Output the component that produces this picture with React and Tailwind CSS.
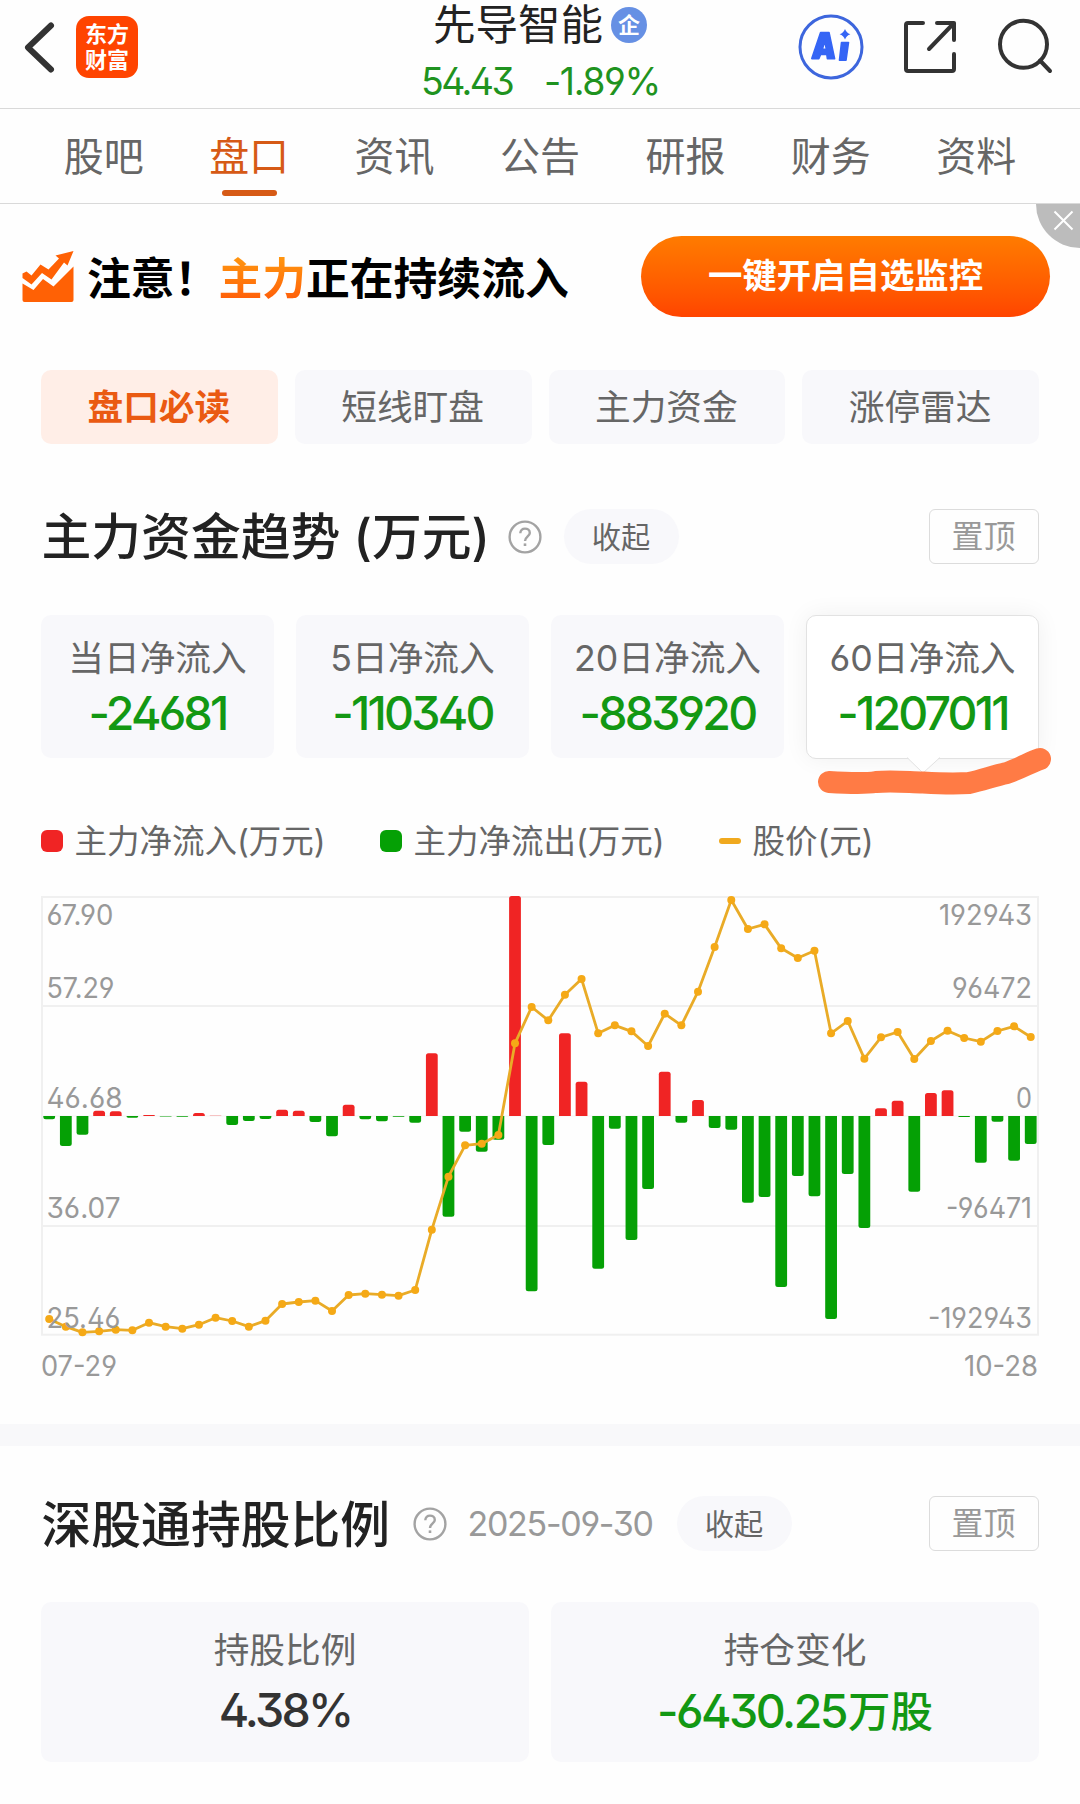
import React from "react";

const TABS = ["股吧", "盘口", "资讯", "公告", "研报", "财务", "资料"];
const FILTERS = ["盘口必读", "短线盯盘", "主力资金", "涨停雷达"];
const FLOWS = [
  { label: "当日净流入", value: "-24681" },
  { label: "5日净流入", value: "-110340" },
  { label: "20日净流入", value: "-883920" },
  { label: "60日净流入", value: "-1207011", active: true },
];

/* Bar ends in chart units; the zero line sits at 708. */
const BARS = [
  718, 798, 764, 692, 694, 713, 705, 709.5, 710.5, 699, 707, 735, 723, 717, 689, 692, 726, 769, 674, 718,
  724, 710, 728, 520, 1010, 755, 815, 779, 48, 1234, 795, 460, 605, 1166, 746, 1080, 927, 575, 728, 660,
  744, 749, 968, 951, 1221, 888, 949, 1317, 882, 1044, 685, 662, 935, 639, 631, 711, 848, 725, 842, 792,
];
const PRICES = [
  1317, 1340, 1357, 1354, 1349, 1351, 1328, 1340, 1346, 1334, 1313, 1323, 1340, 1322, 1272, 1266, 1262, 1293, 1245, 1241,
  1244, 1247, 1230, 1049, 890, 796, 791, 765, 490, 381, 421, 344, 297, 460, 436, 454, 498, 401, 436, 335,
  201, 60, 147, 133, 205, 234, 212, 460, 423, 536, 472, 456, 537, 483, 452, 474, 485, 453, 439, 471,
];
const cx = (i) => 49.2 + i * 16.636;

function barPath(i, end) {
  const x0 = cx(i) - 5.9;
  const x1 = cx(i) + 5.9;
  const z = 236;
  const y = end / 3;
  const h = Math.abs(y - z);
  const r = Math.min(2.5, h);
  const s = y < z ? 1 : -1;
  return `M${x0} ${z}V${y + s * r}Q${x0} ${y} ${x0 + r} ${y}H${x1 - r}Q${x1} ${y} ${x1} ${y + s * r}V${z}Z`;
}

const LEFT = [
  ["67.90", 45, 66],
  ["57.29", 118, 67],
  ["46.68", 228, 75],
  ["36.07", 338, 73],
  ["25.46", 448, 73],
];
const RIGHT = [
  ["192943", 45, 93],
  ["96472", 118, 80],
  ["0", 228, 16],
  ["-96471", 338, 86],
  ["-192943", 448, 104],
];

function Chart() {
  return (
    <svg width="1080" height="505" viewBox="0 0 1080 505" className="block font-['Inter'] text-[28px]">
      <g stroke="#f0f0f0" strokeWidth="2" fill="none">
        <rect x="42" y="17" width="996" height="437.7" />
        <path d="M42 126H1038M42 346H1038" />
        <path d="M42 236H1038" strokeWidth="1" stroke="#f4f4f4" />
      </g>
      {BARS.map((b, i) => (
        <path key={i} d={barPath(i, b)} fill={b < 708 ? "#f02424" : "#05a005"} />
      ))}
      <polyline
        points={PRICES.map((p, i) => `${cx(i)},${p / 3}`).join(" ")}
        fill="none"
        stroke="#e9ab27"
        strokeWidth="2.8"
        strokeLinejoin="round"
      />
      {PRICES.map((p, i) => (
        <circle key={i} cx={cx(i)} cy={p / 3} r="4" fill="#f5a916" />
      ))}
      <g fill="#999" style={{ fontFeatureSettings: '"ss01"' }}>
        {LEFT.map(([t, y, w]) => (
          <text key={t} x="46.5" y={y} textLength={w + 1} lengthAdjust="spacingAndGlyphs">{t}</text>
        ))}
        {RIGHT.map(([t, y, w]) => (
          <text key={t} x={1032 - w} y={y} textLength={w} lengthAdjust="spacingAndGlyphs">{t}</text>
        ))}
        <text x="41" y="495.5" textLength="76" lengthAdjust="spacingAndGlyphs">07-29</text>
        <text x="964" y="495.5" textLength="74" lengthAdjust="spacingAndGlyphs">10-28</text>
      </g>
    </svg>
  );
}

function Help() {
  return (
    <svg width="34" height="34" viewBox="0 0 34 34" fill="none" stroke="#a3a3a3" strokeWidth="2.4" className="block shrink-0">
      <circle cx="17" cy="17" r="15.4" />
      <path d="M12.3 13.2C12.3 10.2 14.4 8.6 17 8.6S21.8 10.3 21.8 12.9C21.8 16.2 17 16.6 17 21" />
      <path d="M17 23.4V26" strokeWidth="2.6" />
    </svg>
  );
}

function Pill() {
  return (
    <span className="flex h-[55px] w-[115px] items-center justify-center rounded-full bg-[#f8f8fb] pt-[2px] text-[29.2px] text-[#666]">收起</span>
  );
}

function TopButton() {
  return (
    <button className="ml-auto flex h-[55px] w-[110px] items-center justify-center rounded-md border border-[#dcdcdc] pt-px text-[32px] text-[#999]">置顶</button>
  );
}

function Header() {
  return (
    <header className="relative flex h-[109px] justify-between border-b border-[#d9d9d9]">
      <div className="flex items-start">
        <svg width="76" height="94" viewBox="0 0 76 94" fill="none" stroke="#333" strokeWidth="6" strokeLinecap="round" strokeLinejoin="round">
          <path d="M51 25.500L28 47.500L51 69.500" />
        </svg>
        <div className="mt-[16px] flex h-[62px] w-[62px] flex-col items-center justify-center rounded-[13px] bg-[#ff4400] text-[22px] font-bold leading-[26px] text-white">
          <span>东方</span>
          <span>财富</span>
        </div>
      </div>
      <div className="absolute left-[421px] top-0 flex w-[240px] flex-col">
        <div className="flex h-[49px] items-center pl-[12px]">
          <span className="text-[42.500px] leading-[49px] text-[#222]">先导智能</span>
          <span className="ml-[8px] flex h-[36px] w-[36px] items-center justify-center rounded-full bg-[#6690e4] text-[22px] font-bold leading-none text-white">企</span>
        </div>
        <div className="flex h-[66px] items-center text-[37.5px] leading-none text-[#1f9320]">
          <span className="w-[123px] tracking-[-2.6px]">54.43</span>
          <span className="tracking-[-1.4px]">-1.89%</span>
        </div>
      </div>
      <svg width="290" height="94" viewBox="790 0 290 94" fill="none">
        <circle cx="831" cy="47" r="31" stroke="#3d66dd" strokeWidth="3" />
        <path fillRule="evenodd" fill="#3565f5" stroke="#3565f5" strokeWidth="1.6" strokeLinejoin="round" d="M820.6 32.5H829L834.6 58.6H827.4L826.8 54.4H820.6L818.8 58.6H811.8ZM824.6 41L822.4 49.2H826.4Z" />
        <path fill="#3565f5" stroke="#3565f5" strokeWidth="1.6" strokeLinejoin="round" d="M841.5 42.5H848.5L846 60.2H839.5Z" />
        <path fill="#3565f5" d="M845 29Q846.4 33 850.4 34.3Q846.4 35.6 845 39.6Q843.6 35.6 839.6 34.3Q843.6 33 845 29Z" />
        <g stroke="#333" strokeWidth="4" strokeLinecap="round" strokeLinejoin="round">
          <path d="M923 23H908Q906 23 906 25V69Q906 71 908 71H952Q954 71 954 69V54" />
          <path d="M937 23H954V40M954 23L929 49" />
          <circle cx="1023.5" cy="44.3" r="23.5" />
          <path d="M1040 60.5L1050 71" />
        </g>
      </svg>
    </header>
  );
}

function Banner() {
  return (
    <section className="relative flex h-[166px] items-start">
      <svg width="52" height="52" viewBox="0 0 52 52" fill="#ff6105" className="ml-[21.5px] mt-[47px] shrink-0">
        <path d="M0.5 22.5L4.5 20.5L9.5 24.5L18.5 13.5L26.5 18.5L37 7.5L33.5 4.500L51.5 0L45.500 14.500L42 11.500L29.5 28.5L20 22L9.500 33.500L0.500 27Z" />
        <path d="M0.5 32.5L11.5 39L21 28L31.5 35.5L51.5 15.5V49Q51.5 51 49.5 51H2.5Q0.5 51 0.5 49Z" />
      </svg>
      <h2 className="ml-[13.5px] mt-[49px] whitespace-nowrap text-[43.8px] font-bold leading-[54px] text-black">
        注意！<span className="bg-gradient-to-b from-[#ff9a10] to-[#ff5408] bg-clip-text text-transparent">主力</span>正在持续流入
      </h2>
      <button className="ml-auto mr-[30px] mt-[31.5px] flex h-[81px] w-[409px] items-center justify-center rounded-full bg-gradient-to-b from-[#ff7b00] to-[#ff4400] pb-px text-[34.4px] font-bold text-white">
        一键开启自选监控
      </button>
      <span className="absolute right-0 top-0 flex h-[44px] w-[44px] rounded-bl-[44px] bg-[#bcbcbc]">
        <svg width="44" height="43" viewBox="0 0 44 43" stroke="#fff" strokeWidth="2">
          <path d="M18.500 7.500L36.500 25.500M36.500 7.500L18.500 25.500" />
        </svg>
      </span>
    </section>
  );
}

function FlowCard({ label, value, active }) {
  return (
    <div
      className={
        active
          ? "relative flex h-[144px] flex-1 flex-col items-center rounded-[10px] border border-[#e2e2e2] bg-white shadow-[0_0_24px_rgba(0,0,0,0.06)]"
          : "flex h-[143px] flex-1 flex-col items-center rounded-[10px] border border-transparent bg-[#f8f8fb]"
      }
    >
      <span className="mt-[15px] whitespace-nowrap text-[35.7px] leading-[54px] text-[#666]">{label}</span>
      <span className="text-[46.5px] font-medium leading-[56px] tracking-[-2.8px] text-[#139813]">{value}</span>
      {active && (
        <svg width="250" height="60" viewBox="810 740 250 60" fill="none" className="absolute left-[4px] top-[124px]">
          <path d="M906 757L922 773L939 757V755H906Z" fill="#fff" />
          <path d="M906 757.500L922 773L939 757.500" stroke="#e2e2e2" />
          <path
            d="M828 782C845 783 862 784 875 782C890 780.500 905 782 922 782.500C940 783.500 952 784 968 783C982 780 992 776 1006 773C1020 768 1030 762 1039 759"
            stroke="#ff7b45"
            strokeWidth="22"
            strokeLinecap="round"
            strokeLinejoin="round"
          />
        </svg>
      )}
    </div>
  );
}

export default function App() {
  return (
    <div className="h-[1804px] w-[1080px] overflow-hidden bg-[#fefefe] font-['Inter','Noto_Sans_CJK_SC',sans-serif] [font-feature-settings:'ss01']">
      <Header />
      <nav className="flex h-[95px] border-b border-[#d9d9d9] px-[31px]">
        {TABS.map((t, i) => (
          <div key={t} className={i === 1 ? "flex flex-1 flex-col items-center text-[#d65a16]" : "flex flex-1 flex-col items-center text-[#666]"}>
            <span className="mt-[19px] text-[40px] leading-[58px]">{t}</span>
            {i === 1 && <span className="mt-[4px] h-[6px] w-[55px] rounded-full bg-[#d65a16]" />}
          </div>
        ))}
      </nav>
      <Banner />
      <div className="flex gap-[17px] px-[41px]">
        {FILTERS.map((f, i) => (
          <div
            key={f}
            className={
              i === 0
                ? "flex h-[74px] flex-1 items-center justify-center rounded-[10px] bg-[#ffeee7] pr-px pt-px text-[35.7px] font-bold text-[#ea5a12]"
                : "flex h-[74px] flex-1 items-center justify-center rounded-[10px] bg-[#f8f8fb] pr-px pt-px text-[35.7px] text-[#666]"
            }
          >
            {f}
          </div>
        ))}
      </div>

      <div className="mt-[65px] flex h-[55px] items-center px-[41.5px]">
        <h2 className="w-[466px] whitespace-nowrap pt-[2px] text-[49.800px] font-medium leading-[55px] text-[#222]">主力资金趋势 (万元)</h2>
        <Help />
        <span className="w-[22px]" />
        <Pill />
        <TopButton />
      </div>

      <div className="mt-[51px] flex h-[143px] gap-[22px] px-[41px]">
        {FLOWS.map((f) => (
          <FlowCard key={f.label} {...f} />
        ))}
      </div>

      <div className="mt-[58px] flex h-[50px] items-center px-[41px] text-[32.500px] text-[#666]">
        <span className="h-[22px] w-[22px] rounded-[6px] bg-[#f02424]" />
        <span className="ml-[11.5px] w-[305.5px] whitespace-nowrap pt-[2px]">主力净流入(万元)</span>
        <span className="h-[22px] w-[22px] rounded-[6px] bg-[#05a005]" />
        <span className="ml-[11.5px] w-[305.5px] whitespace-nowrap pt-[2px]">主力净流出(万元)</span>
        <span className="h-[6px] w-[22px] rounded-full bg-[#f0a91e]" />
        <span className="ml-[11.5px] whitespace-nowrap pt-[2px]">股价(元)</span>
      </div>

      <div className="mt-[14px]">
        <Chart />
      </div>

      <div className="mt-[39px] h-[22px] bg-[#f8f8fa]" />

      <div className="mt-[50px] flex h-[55px] items-center px-[41.5px]">
        <h2 className="w-[371px] whitespace-nowrap pt-[3px] text-[49.800px] font-medium leading-[55px] text-[#222]">深股通持股比例</h2>
        <Help />
        <span className="ml-[21px] w-[209px] whitespace-nowrap text-[34px] tracking-[-1.3px] text-[#999]">2025-09-30</span>
        <Pill />
        <TopButton />
      </div>

      <div className="mt-[51px] flex gap-[22px] px-[41px]">
        <div className="flex h-[160px] flex-1 flex-col items-center rounded-[10px] bg-[#f8f8fb]">
          <span className="mt-[21px] text-[35.7px] leading-[54px] text-[#666]">持股比例</span>
          <span className="mt-[5px] text-[46.5px] font-medium leading-[56px] tracking-[-2.8px] text-[#333]">4.38%</span>
        </div>
        <div className="flex h-[160px] flex-1 flex-col items-center rounded-[10px] bg-[#f8f8fb]">
          <span className="mt-[21px] text-[35.7px] leading-[54px] text-[#666]">持仓变化</span>
          <span className="mt-[5px] flex items-center text-[46.5px] font-medium leading-[56px] text-[#139813]">
            <span className="tracking-[-2.5px]">-6430.25</span>
            <span className="ml-[2px] pt-[2px] text-[42.5px]">万股</span>
          </span>
        </div>
      </div>
    </div>
  );
}
